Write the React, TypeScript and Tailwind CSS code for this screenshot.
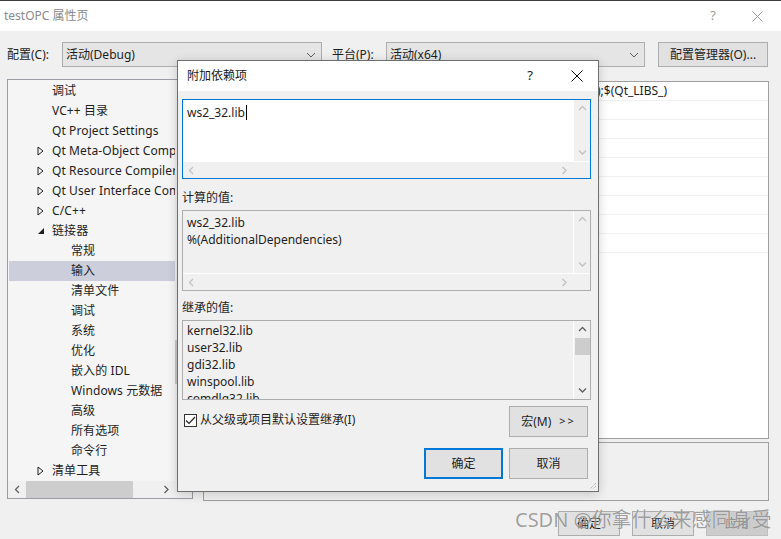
import React from "react";

type Dir = "up" | "down" | "left" | "right";

function Chevron({ dir, color = "#c2c2c2" }: { dir: Dir; color?: string }) {
  const vertical = dir === "up" || dir === "down";
  const d = {
    up: "M1 5 L4.5 1.5 L8 5",
    down: "M1 1.5 L4.5 5 L8 1.5",
    left: "M5 1 L1.5 4.5 L5 8",
    right: "M1.5 1 L5 4.5 L1.5 8",
  }[dir];
  return (
    <svg width={vertical ? 9 : 7} height={vertical ? 7 : 9} viewBox={vertical ? "0 0 9 7" : "0 0 7 9"}>
      <path d={d} fill="none" stroke={color} strokeWidth="1.3" />
    </svg>
  );
}

function ComboArrow() {
  return (
    <svg width="10" height="6" viewBox="0 0 10 6">
      <path d="M1 1 L5 5 L9 1" fill="none" stroke="#606060" strokeWidth="1" />
    </svg>
  );
}

function TreeArrow({ open }: { open?: boolean }) {
  if (open) {
    return (
      <svg width="8" height="8" viewBox="0 0 8 8">
        <path d="M7 1 L7 7 L1 7 Z" fill="#1e1e1e" />
      </svg>
    );
  }
  return (
    <svg width="7" height="10" viewBox="0 0 7 10">
      <path d="M1 1 L6 5 L1 9 Z" fill="none" stroke="#1e1e1e" strokeWidth="1" />
    </svg>
  );
}

type TreeItem = { label: string; level: 1 | 2; arrow?: "closed" | "open"; selected?: boolean };

const treeItems: TreeItem[] = [
  { label: "调试", level: 1 },
  { label: "VC++ 目录", level: 1 },
  { label: "Qt Project Settings", level: 1 },
  { label: "Qt Meta-Object Compiler", level: 1, arrow: "closed" },
  { label: "Qt Resource Compiler", level: 1, arrow: "closed" },
  { label: "Qt User Interface Compiler", level: 1, arrow: "closed" },
  { label: "C/C++", level: 1, arrow: "closed" },
  { label: "链接器", level: 1, arrow: "open" },
  { label: "常规", level: 2 },
  { label: "输入", level: 2, selected: true },
  { label: "清单文件", level: 2 },
  { label: "调试", level: 2 },
  { label: "系统", level: 2 },
  { label: "优化", level: 2 },
  { label: "嵌入的 IDL", level: 2 },
  { label: "Windows 元数据", level: 2 },
  { label: "高级", level: 2 },
  { label: "所有选项", level: 2 },
  { label: "命令行", level: 2 },
  { label: "清单工具", level: 1, arrow: "closed" },
];

function TreePanel() {
  return (
    <div className="flex h-[420px] w-[186px] shrink-0 flex-col border border-[#9a9ca6] bg-[#f5f5f5]">
      <div className="flex min-h-0 flex-1">
        <div className="w-[167px] overflow-hidden pt-px">
          {treeItems.map((it, i) => (
            <div
              key={i}
              className={
                "ml-px flex h-[20px] items-center whitespace-nowrap tracking-[0.1px] " +
                (it.selected ? "bg-[#cccedb]" : "")
              }
            >
              <div className={it.level === 1 ? "w-[43px] shrink-0" : "w-[62px] shrink-0"}>
                {it.arrow && (
                  <div className="ml-[28px] flex w-[8px] items-center">
                    <TreeArrow open={it.arrow === "open"} />
                  </div>
                )}
              </div>
              <span>{it.label}</span>
            </div>
          ))}
        </div>
        <div className="flex w-[17px] flex-col bg-[#f0f0f0]">
          <div className="h-[260px]" />
          <div className="h-[44px] w-[3px] bg-[#c8c8c8]" />
        </div>
      </div>
      <div className="flex h-[17px] shrink-0 items-center bg-[#f0f0f0]">
        <div className="flex w-[18px] justify-center">
          <Chevron dir="left" color="#606060" />
        </div>
        <div className="h-[17px] w-[107px] bg-[#cdcdcd]" />
        <div className="flex-1" />
        <div className="flex w-[18px] justify-center">
          <Chevron dir="right" color="#606060" />
        </div>
        <div className="w-[17px]" />
      </div>
    </div>
  );
}

function PropertyGrid() {
  return (
    <div className="h-[358px] border border-[#a0a0a0] bg-white">
      {Array.from({ length: 9 }).map((_, i) => (
        <div key={i} className="flex h-[19px] items-center whitespace-nowrap border-b border-[#f0f0f0]">
          <div className="w-[393px] shrink-0 pl-[4px]">{i === 0 ? "附加依赖项" : ""}</div>
          {i === 0 && <span>);$(Qt_LIBS_)</span>}
        </div>
      ))}
    </div>
  );
}

function ScrollBox({
  lines,
  white,
  focused,
  hscroll,
  thumb,
  height,
  padTop,
}: {
  lines: string[];
  white?: boolean;
  focused?: boolean;
  hscroll?: boolean;
  thumb?: boolean;
  height: string;
  padTop: string;
}) {
  const arrowColor = thumb ? "#606060" : "#c2c2c2";
  return (
    <div
      className={
        "flex flex-col border " +
        height +
        " " +
        (focused ? "border-[#0078d7] " : "border-[#adadad] ") +
        (white ? "bg-white" : "bg-[#f0f0f0]")
      }
    >
      <div className="flex min-h-0 flex-1">
        <div className={"min-w-0 flex-1 overflow-hidden pl-[4px] leading-[17px] " + padTop}>
          {lines.map((l, i) => (
            <div key={i} className="flex whitespace-nowrap">
              {l}
              {focused && i === 0 && <span className="ml-px mt-[1px] h-[15px] w-px bg-black" />}
            </div>
          ))}
        </div>
        <div className="flex w-[17px] flex-col items-center border-l border-[#ffffff] bg-[#f0f0f0]">
          <div className="flex h-[17px] items-center">
            <Chevron dir="up" color={arrowColor} />
          </div>
          {thumb && <div className="h-[17px] w-[15px] bg-[#cdcdcd]" />}
          <div className="flex-1" />
          <div className="flex h-[17px] items-center">
            <Chevron dir="down" color={arrowColor} />
          </div>
        </div>
      </div>
      {hscroll && (
        <div className="flex h-[17px] shrink-0 items-center border-t border-white bg-[#f0f0f0]">
          <div className="flex w-[17px] justify-center">
            <Chevron dir="left" />
          </div>
          <div className="flex-1" />
          <div className="flex w-[17px] justify-center">
            <Chevron dir="right" />
          </div>
          <div className="w-[17px]" />
        </div>
      )}
    </div>
  );
}

function DialogButton({ children, primary }: { children: React.ReactNode; primary?: boolean }) {
  return (
    <div
      className={
        "flex h-[31px] w-[79px] items-center justify-center bg-[#e1e1e1] " +
        (primary ? "border-2 border-[#0078d7]" : "border border-[#adadad]")
      }
    >
      {children}
    </div>
  );
}

function AddDependenciesDialog() {
  return (
    <div className="absolute left-[177px] top-[59px] flex h-[432px] w-[422px] flex-col border border-[#6f6f6f] bg-[#f0f0f0] shadow-[0_2px_10px_rgba(0,0,0,0.18)]">
      <div className="flex h-[30px] shrink-0 items-center bg-white pl-[9px] text-[#1a1a1a]">
        <span className="flex-1">附加依赖项</span>
        <span className="w-[20px] text-center text-[13px]">?</span>
        <div className="ml-[31px] mr-[15px] flex w-[12px] justify-center">
          <svg width="12" height="12" viewBox="0 0 12 12">
            <path d="M0.5 0.5 L11.5 11.5 M11.5 0.5 L0.5 11.5" stroke="#111" strokeWidth="1" />
          </svg>
        </div>
      </div>

      <div className="relative flex flex-1 flex-col pl-[4px] pr-[7px] pt-[8px]">
        <ScrollBox lines={["ws2_32.lib"]} white focused hscroll height="h-[80px]" padTop="pt-[4px]" />

        <div className="mt-[10px] leading-[17px]">计算的值:</div>
        <div className="mt-[4px]">
          <ScrollBox
            lines={["ws2_32.lib", "%(AdditionalDependencies)"]}
            hscroll
            height="h-[81px]"
            padTop="pt-[3px]"
          />
        </div>

        <div className="mt-[8px] leading-[17px]">继承的值:</div>
        <div className="mt-[4px]">
          <ScrollBox
            lines={["kernel32.lib", "user32.lib", "gdi32.lib", "winspool.lib", "comdlg32.lib"]}
            thumb
            height="h-[80px]"
            padTop="pt-[1px]"
          />
        </div>

        <div className="mt-[6px] flex items-start pr-[3px]">
          <div className="flex flex-1 items-center pl-[2px] pt-[5px]">
            <div className="flex h-[13px] w-[13px] items-center justify-center border border-[#333] bg-white">
              <svg width="11" height="9" viewBox="0 0 11 9">
                <path d="M1 4.5 L4 7.5 L10 1" fill="none" stroke="#222" strokeWidth="1.2" />
              </svg>
            </div>
            <span className="ml-[3px]">从父级或项目默认设置继承(I)</span>
          </div>
          <DialogButton>
            宏(M)<span className="ml-[8px] text-[11px] tracking-[2px]">&gt;&gt;</span>
          </DialogButton>
        </div>

        <div className="mt-[11px] flex justify-end gap-[6px] pr-[3px]">
          <DialogButton primary>确定</DialogButton>
          <DialogButton>取消</DialogButton>
        </div>

        <svg className="absolute bottom-[1px] right-[1px]" width="9" height="9" viewBox="0 0 9 9">
          <path d="M8 2 L2 8 M8 5 L5 8 M8 8 L8 8" stroke="#a0a0a0" strokeWidth="1" strokeDasharray="1 1" />
        </svg>
      </div>
    </div>
  );
}

function WindowButton({ children, disabled }: { children: React.ReactNode; disabled?: boolean }) {
  return (
    <div
      className={
        "flex h-[25px] w-[62px] items-center justify-center border " +
        (disabled ? "border-[#bfbfbf] bg-[#cccccc] text-[#838383]" : "border-[#adadad] bg-[#e1e1e1]")
      }
    >
      {children}
    </div>
  );
}

export default function App() {
  return (
    <div className="relative h-[539px] w-[781px] overflow-hidden border-t border-[#3c3c3c] bg-[#f0f0f0] font-['Noto_Sans','Noto_Sans_CJK_SC',sans-serif] text-[12px] text-[#1e1e1e]">
      <div className="flex h-[30px] items-center bg-white pl-[4px] text-[#8a8a8a]">
        <span className="flex-1">testOPC 属性页</span>
        <span className="w-[14px] text-center text-[13px] text-[#9a9a9a]">?</span>
        <div className="ml-[32px] mr-[18px] flex">
          <svg width="11" height="11" viewBox="0 0 11 11">
            <path d="M0.5 0.5 L10.5 10.5 M10.5 0.5 L0.5 10.5" stroke="#9a9a9a" strokeWidth="1" />
          </svg>
        </div>
      </div>

      <div className="flex flex-col pl-[7px] pr-[12px] pt-[11px]">
        <div className="flex h-[25px] items-center">
          <span className="w-[55px] shrink-0 text-[#1e1e1e]">配置(C):</span>
          <div className="flex h-[25px] w-[260px] items-center border border-[#adadad] bg-[#e5e5e5] pl-[3px] pr-[5px]">
            <span className="flex-1">活动(Debug)</span>
            <ComboArrow />
          </div>
          <span className="ml-[10px] w-[54px] shrink-0">平台(P):</span>
          <div className="flex h-[25px] w-[259px] items-center border border-[#adadad] bg-[#e5e5e5] pl-[3px] pr-[5px]">
            <span className="flex-1">活动(x64)</span>
            <ComboArrow />
          </div>
          <div className="ml-[13px] flex h-[25px] w-[110px] items-center justify-center border border-[#adadad] bg-[#e1e1e1]">
            配置管理器(O)...
          </div>
        </div>

        <div className="mt-[12px] flex gap-[10px]">
          <TreePanel />
          <div className="flex w-[566px] flex-col pt-[2px]">
            <PropertyGrid />
            <div className="mt-[3px] h-[59px] border border-[#a0a0a0] bg-[#f0f0f0]" />
          </div>
        </div>

        <div className="mt-[10px] flex justify-end gap-[12px] pr-[1px]">
          <WindowButton>确定</WindowButton>
          <WindowButton>取消</WindowButton>
          <WindowButton disabled>应用</WindowButton>
        </div>
      </div>

      <AddDependenciesDialog />

      <div className="pointer-events-none absolute left-[515px] top-[504px] whitespace-nowrap text-[20px] text-[rgba(95,95,95,0.6)] [text-shadow:0_0_1px_rgba(255,255,255,0.9)]">
        CSDN @你拿什么来感同身受
      </div>
    </div>
  );
}
